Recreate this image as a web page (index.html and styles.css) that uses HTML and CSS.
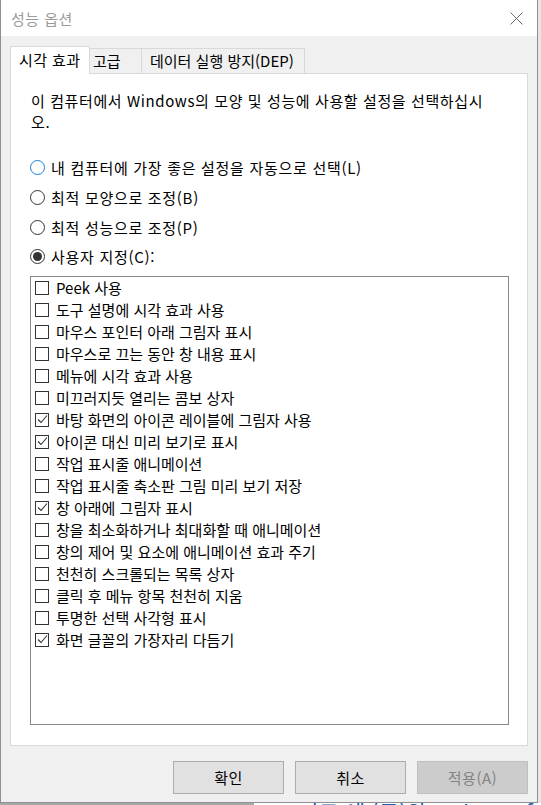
FILE: index.html
```html
<!DOCTYPE html>
<html lang="ko">
<head>
    <meta charset="UTF-8">
    <title>성능 옵션</title>
    <link rel="stylesheet" href="styles.css">
</head>
<body>
    <div class="window">
        <div class="titlebar">
            <span class="title">성능 옵션</span>
            <svg class="close" width="13" height="13" viewBox="0 0 13 13">
                <path d="M0.5 0.5 L12.5 12.5 M12.5 0.5 L0.5 12.5" stroke="#6b6b6b" stroke-width="1" fill="none"/>
            </svg>
        </div>

        <div class="content">
            <div class="tabs">
                <div class="tab active">시각 효과</div>
                <div class="tab second">고급</div>
                <div class="tab">데이터 실행 방지(DEP)</div>
            </div>

            <div class="panel">
                <p class="desc">이 컴퓨터에서 Windows의 모양 및 성능에 사용할 설정을 선택하십시<br>오.</p>

                <div class="options">
                    <div class="radio-row"><span class="radio hover"></span>내 컴퓨터에 가장 좋은 설정을 자동으로 선택(L)</div>
                    <div class="radio-row"><span class="radio"></span>최적 모양으로 조정(B)</div>
                    <div class="radio-row"><span class="radio"></span>최적 성능으로 조정(P)</div>
                    <div class="radio-row"><span class="radio checked"></span>사용자 지정(C):</div>
                </div>

                <div class="listbox" id="list"></div>
            </div>

            <div class="buttons">
                <button>확인</button>
                <button>취소</button>
                <button class="disabled">적용(A)</button>
            </div>
        </div>
    </div>

    <div class="behind">
        <div class="shade"></div>
        <div class="page-text">기드 에 (구)와 · Microsoft</div>
    </div>

    <script>
        const items = [
            ['Peek 사용', false],
            ['도구 설명에 시각 효과 사용', false],
            ['마우스 포인터 아래 그림자 표시', false],
            ['마우스로 끄는 동안 창 내용 표시', false],
            ['메뉴에 시각 효과 사용', false],
            ['미끄러지듯 열리는 콤보 상자', false],
            ['바탕 화면의 아이콘 레이블에 그림자 사용', true],
            ['아이콘 대신 미리 보기로 표시', true],
            ['작업 표시줄 애니메이션', false],
            ['작업 표시줄 축소판 그림 미리 보기 저장', false],
            ['창 아래에 그림자 표시', true],
            ['창을 최소화하거나 최대화할 때 애니메이션', false],
            ['창의 제어 및 요소에 애니메이션 효과 주기', false],
            ['천천히 스크롤되는 목록 상자', false],
            ['클릭 후 메뉴 항목 천천히 지움', false],
            ['투명한 선택 사각형 표시', false],
            ['화면 글꼴의 가장자리 다듬기', true]
        ];

        const list = document.getElementById('list');
        items.forEach(function (item) {
            const row = document.createElement('div');
            row.classList.add('item');

            const box = document.createElement('span');
            box.classList.add('checkbox');
            if (item[1]) {
                box.innerHTML = '<svg width="11" height="11" viewBox="0 0 11 11"><path d="M1 5.5 L4 8.5 L10 1.5" stroke="#333" stroke-width="1.1" fill="none"/></svg>';
            }

            const label = document.createElement('span');
            label.textContent = item[0];

            row.appendChild(box);
            row.appendChild(label);
            list.appendChild(row);
        });
    </script>
</body>
</html>
```

FILE: styles.css
```css
body {
    margin: 0;
    font-family: "Noto Sans CJK KR", "Noto Sans", sans-serif;
    font-size: 15px;
    color: #000;
    background-color: #e6e6e6;
}

.window {
    box-sizing: border-box;
    width: 538px;
    height: 803px;
    border: 1px solid #8f8f8f;
    border-top: none;
    background-color: #f0f0f0;
    display: flex;
    flex-direction: column;
}

/* Title bar */
.titlebar {
    height: 36px;
    background-color: #fff;
    display: flex;
    align-items: center;
    justify-content: space-between;
    padding: 0 14px 0 10px;
}

.title {
    color: #9a9a9a;
    font-size: 15px;
    letter-spacing: 0.5px;
}

/* Tabs */
.content {
    padding: 10px 9px 0 9px;
    display: flex;
    flex-direction: column;
}

.tabs {
    display: flex;
    align-items: flex-end;
    height: 27px;
}

.tab {
    box-sizing: border-box;
    height: 25px;
    border: 1px solid #d9d9d9;
    border-bottom: none;
    padding: 0 8px 0 8px;
    line-height: 23px;
    background-color: #f0f0f0;
    white-space: nowrap;
    position: relative;
}

.tab.active {
    width: 80px;
    height: 28px;
    background-color: #fff;
    line-height: 26px;
    margin-bottom: -1px;
    z-index: 1;
    letter-spacing: 0.4px;
}

.tab.second {
    width: 52px;
    border-left: none;
    padding-left: 3px;
}

.tab:last-child {
    width: 163px;
    border-left: none;
    padding-left: 8px;
}

/* Panel */
.panel {
    box-sizing: border-box;
    width: 518px;
    height: 673px;
    background-color: #fff;
    border: 1px solid #d9d9d9;
    padding: 16px 0 0 20px;
}

.desc {
    margin: 0;
    line-height: 21px;
    letter-spacing: 0.6px;
}

.options {
    margin-top: 21px;
}

.radio-row {
    height: 29.7px;
    display: flex;
    align-items: center;
    letter-spacing: 0.7px;
}

.radio {
    box-sizing: border-box;
    width: 15px;
    height: 15px;
    border: 1px solid #333;
    border-radius: 50%;
    margin-left: -1px;
    margin-right: 6px;
    display: flex;
    align-items: center;
    justify-content: center;
}

.radio.hover {
    border-color: #1a7fd4;
}

.radio.checked::after {
    content: "";
    width: 9px;
    height: 9px;
    border-radius: 50%;
    background-color: #333;
}

/* Check list */
.listbox {
    box-sizing: border-box;
    width: 479px;
    height: 449px;
    margin-top: 4px;
    margin-left: -1px;
    border: 1px solid #828790;
    padding: 0 0 0 4px;
}

.item {
    height: 22px;
    display: flex;
    align-items: center;
}

.checkbox {
    box-sizing: border-box;
    width: 14px;
    height: 14px;
    border: 1px solid #333;
    margin-right: 7px;
    display: flex;
    align-items: center;
    justify-content: center;
}

/* Buttons */
.buttons {
    display: flex;
    justify-content: flex-end;
    gap: 11px;
    margin-top: 15px;
}

button {
    box-sizing: border-box;
    width: 111px;
    height: 33px;
    background-color: #e1e1e1;
    border: 1px solid #adadad;
    font-family: inherit;
    font-size: 15px;
    letter-spacing: 0.5px;
    color: #000;
    padding: 0;
}

button.disabled {
    background-color: #cccccc;
    border-color: #bfbfbf;
    color: #838383;
}

/* What shows under the dialog */
.behind {
    display: flex;
    height: 2px;
    overflow: hidden;
}

.shade {
    width: 288px;
    background-color: #a8a8a8;
}

.page-text {
    flex: 1;
    background-color: #fff;
    color: #1a5fb4;
    font-size: 22px;
    line-height: 16px;
    padding-left: 44px;
    white-space: nowrap;
}
```
